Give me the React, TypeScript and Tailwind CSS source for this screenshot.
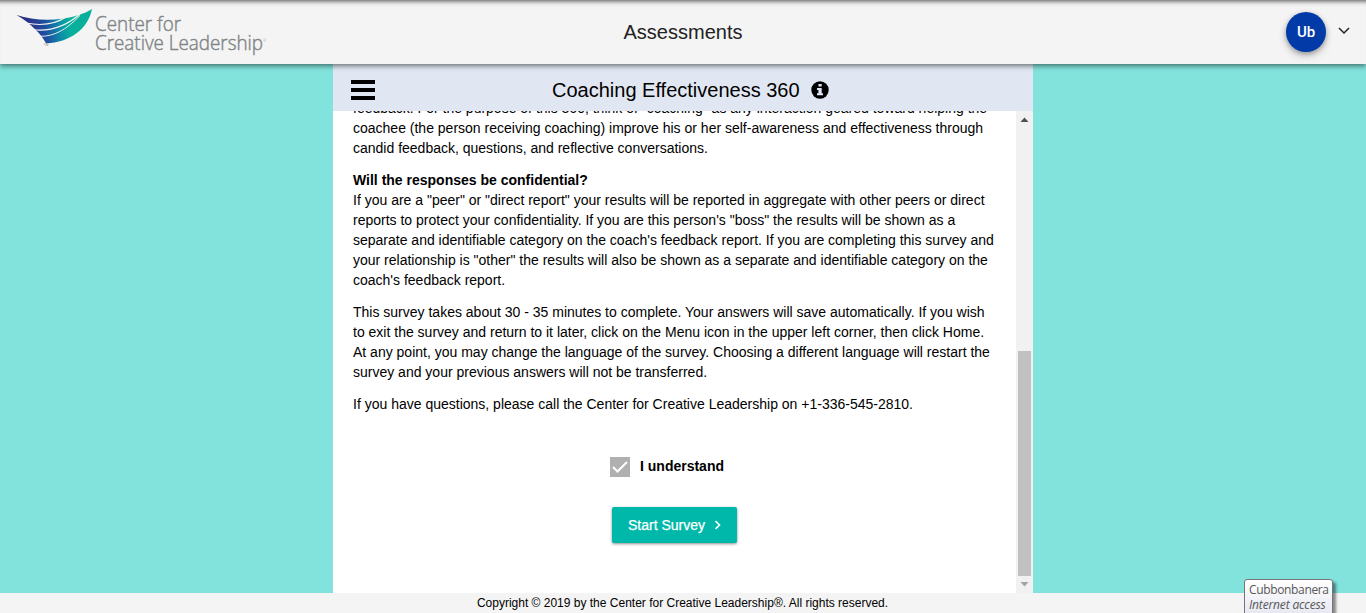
import React from "react";

const paragraphs: { title?: string; lines: string[] }[] = [
  {
    lines: [
      'feedback. For the purpose of this 360, think of "coaching" as any interaction geared toward helping the',
      "coachee (the person receiving coaching) improve his or her self-awareness and effectiveness through",
      "candid feedback, questions, and reflective conversations.",
    ],
  },
  {
    title: "Will the responses be confidential?",
    lines: [
      'If you are a "peer" or "direct report" your results will be reported in aggregate with other peers or direct',
      'reports to protect your confidentiality. If you are this person\'s "boss" the results will be shown as a',
      "separate and identifiable category on the coach's feedback report. If you are completing this survey and",
      'your relationship is "other" the results will also be shown as a separate and identifiable category on the',
      "coach's feedback report.",
    ],
  },
  {
    lines: [
      "This survey takes about 30 - 35 minutes to complete. Your answers will save automatically. If you wish",
      "to exit the survey and return to it later, click on the Menu icon in the upper left corner, then click Home.",
      "At any point, you may change the language of the survey. Choosing a different language will restart the",
      "survey and your previous answers will not be transferred.",
    ],
  },
  {
    lines: ["If you have questions, please call the Center for Creative Leadership on +1-336-545-2810."],
  },
];

function Logo() {
  return (
    <svg width="290" height="64" viewBox="0 0 290 64" className="block" aria-label="Center for Creative Leadership">
      <defs>
        <linearGradient id="wing" x1="16" y1="20" x2="86" y2="10" gradientUnits="userSpaceOnUse">
          <stop offset="0.15" stopColor="#2b3288" />
          <stop offset="0.4" stopColor="#1d4fa0" />
          <stop offset="0.62" stopColor="#0d94a8" />
          <stop offset="0.75" stopColor="#08b09b" />
        </linearGradient>
      </defs>
      <path d="M16.500 15 C30 19.500 46 21 62 18.800 C74 17 84 14 92 9 C88 29 70 42.500 46 43.300 C43 38 40 34 35.300 29.500 C30 24 24 19 16.500 15 Z" fill="url(#wing)" />
      <g fill="none" stroke="#f4f4f4" strokeWidth="1.100">
        <path d="M26 23 C41 26 55 24.500 67 16.500" />
        <path d="M34 29.800 C52 31.500 68 25 81 13" />
        <path d="M40 36.300 C54 36.500 66 30 80 15.500" strokeWidth="0.900" />
      </g>
      <text x="44" y="46" fontSize="3" fill="#777" fontFamily="Open Sans, sans-serif">TM</text>
      <g fill="#808487" stroke="#808487" strokeWidth="0.450" fontFamily="Open Sans, sans-serif" fontWeight="300">
        <text x="95" y="30.500" fontSize="20.500" textLength="86" lengthAdjust="spacingAndGlyphs">Center for</text>
        <text x="95" y="50" fontSize="20.500" textLength="168" lengthAdjust="spacingAndGlyphs">Creative Leadership</text>
        <text x="263" y="41.500" fontSize="4" strokeWidth="0">®</text>
      </g>
    </svg>
  );
}

export default function App() {
  return (
    <div className="relative flex h-[613px] w-full flex-col overflow-hidden bg-[#82e2dc] font-['Liberation_Sans',Arial,sans-serif] text-sm text-black">
      <header className="relative z-10 grid h-16 shrink-0 grid-cols-[1fr_auto_1fr] items-center bg-[#f4f4f4] shadow-[0_2px_5px_rgba(0,0,0,0.5),inset_0_6px_5px_-5px_rgba(0,0,0,0.7)]">
        <Logo />
        <h1 className="text-xl text-[#222]">Assessments</h1>
        <div className="flex items-center justify-end gap-3 pr-4">
          <div className="flex size-10 items-center justify-center rounded-full bg-[#023ba8] pt-0.5 font-['Roboto',sans-serif] text-[15px] font-medium text-white shadow-[0_2px_5px_rgba(0,0,0,0.3),0_4px_10px_rgba(0,0,0,0.15)]">Ub</div>
          <svg width="12" height="8" viewBox="0 0 12 8" className="-mt-0.5" fill="none" stroke="#222" strokeWidth="1.500">
            <path d="M1 1 L6 6 L11 1" />
          </svg>
        </div>
      </header>

      <main className="mx-auto flex min-h-0 w-[700px] flex-1 flex-col bg-white">
        <div className="grid h-[47px] shrink-0 grid-cols-[219px_auto_1fr] items-center bg-[#e0e7f3] pt-1">
          <svg width="24" height="20" viewBox="0 0 24 20" className="ml-[18px]">
            <path d="M0 0h24v4H0Z M0 8h24v4H0Z M0 16h24v4H0Z" />
          </svg>
          <h2 className="text-xl">Coaching Effectiveness 360</h2>
          <svg width="18" height="18" viewBox="0 0 18 18" className="ml-[11px]">
            <circle cx="9" cy="9" r="8.700" />
            <path d="M7.500 3h3.200v2.500H7.500Z M6 7h4.700v5.200H12v2H6v-2h1.400V9H6Z" fill="#e0e7f3" />
          </svg>
        </div>
        <div className="flex min-h-0 flex-1">
          <section className="flex min-w-0 flex-1 flex-col overflow-hidden pl-5">
            <div className="-mt-[13px] flex flex-col gap-3">
              {paragraphs.map((p) => (
                <div key={p.lines[0]} className="leading-5 whitespace-nowrap">
                  {p.title && <h3 className="font-bold">{p.title}</h3>}
                  {p.lines.map((line) => (
                    <p key={line}>{line}</p>
                  ))}
                </div>
              ))}
            </div>
            <label className="mt-[42px] ml-[257px] flex h-5 items-center gap-[10px] font-bold">
              <span className="mt-0.5 flex size-5 items-center justify-center bg-[#b0b0b0]">
                <svg width="16" height="14" viewBox="0 0 16 14" fill="none" stroke="#fff" strokeWidth="2">
                  <path d="M1 7 L5.500 11.500 L15 2" />
                </svg>
              </span>
              <span className="-mt-px">I understand</span>
            </label>
            <button className="mt-[31px] ml-[259px] flex h-9 w-[125px] shrink-0 items-center gap-[10px] rounded-[2px] bg-[#00b8a9] pl-4 text-white shadow-[0_1px_3px_rgba(0,0,0,0.45)]">
              <span className="[-webkit-text-stroke:0.25px_white]">Start Survey</span>
              <svg width="6" height="10" viewBox="0 0 6 10" fill="none" stroke="#fff" strokeWidth="1.600">
                <path d="M0.500 1 L4.500 5 L0.500 9" />
              </svg>
            </button>
          </section>
          <div className="flex w-[17px] shrink-0 flex-col items-center bg-[#f1f1f1]">
            <svg width="17" height="17" viewBox="0 0 17 17">
              <path d="M4.500 11 L8.500 6.500 L12.500 11 Z" fill="#505050" />
            </svg>
            <div className="mt-[223px] mb-[17px] w-[13px] flex-1 bg-[#c1c1c1]" />
            <svg width="17" height="17" viewBox="0 0 17 17" className="-mt-[17px] shrink-0">
              <path d="M4.500 6 L8.500 10.500 L12.500 6 Z" fill="#a3a3a3" />
            </svg>
          </div>
        </div>
      </main>

      <footer className="flex h-5 shrink-0 items-center justify-center bg-[#f4f4f4] pr-px text-xs">
        Copyright © 2019 by the Center for Creative Leadership®. All rights reserved.
      </footer>

      <div className="absolute top-[579px] left-[1244px] h-[40px] w-[89px] rounded-[3px] border border-[#767676] bg-gradient-to-b from-white to-[#e4e5f0] pl-1 font-['Open_Sans',sans-serif] text-xs leading-[15px] tracking-[-0.35px] whitespace-nowrap text-[#575757] shadow-[3px_3px_3px_rgba(0,0,0,0.45)]">
        <p className="pt-0.5">Cubbonbanera</p>
        <p className="tracking-[-0.15px] italic">Internet access</p>
      </div>
    </div>
  );
}
